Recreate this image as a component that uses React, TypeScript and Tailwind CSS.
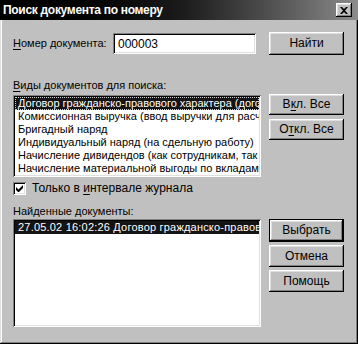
// Win9x-style "find document by number" dialog, greyscale.
const raised =
  "shadow-[inset_-1px_-1px_0_#000,inset_1px_1px_0_#fff,inset_-2px_-2px_0_#808080,inset_2px_2px_0_#dfdfdf]";
const sunken =
  "shadow-[inset_1px_1px_0_#808080,inset_-1px_-1px_0_#fff,inset_2px_2px_0_#000,inset_-2px_-2px_0_#dfdfdf]";

function Btn({
  children,
  def,
  h = "h-[22px]",
}: {
  children: React.ReactNode;
  def?: boolean;
  h?: string;
}) {
  return (
    <div
      className={`${h} w-[75px] shrink-0 bg-[#c0c0c0] text-[12px] text-black ${def ? "border border-black" : ""}`}
    >
      <div className={`w-full h-full flex items-center justify-center ${raised}`}>
        <span className="whitespace-nowrap leading-[13px]">{children}</span>
      </div>
    </div>
  );
}

function U({ children }: { children: React.ReactNode }) {
  return <span className="underline underline-offset-2">{children}</span>;
}

const docTypes = [
  "Договор гражданско-правового характера (договор подряда)",
  "Комиссионная выручка (ввод выручки для расчета)",
  "Бригадный наряд",
  "Индивидуальный наряд (на сдельную работу)",
  "Начисление дивидендов (как сотрудникам, так и сторонним)",
  "Начисление материальной выгоды по вкладам",
];

export default function App() {
  return (
    <div
      className="w-[358px] h-[344px] bg-[#c0c0c0] flex flex-col text-black shadow-[inset_-1px_-1px_0_#000,inset_1px_1px_0_#dfdfdf,inset_-2px_-2px_0_#808080,inset_2px_2px_0_#fff]"
      style={{ fontFamily: '"Liberation Sans", Arial, sans-serif' }}
    >
      {/* title bar */}
      <div className="h-[20px] flex items-center justify-between pl-[3px] pr-[6px] bg-gradient-to-r from-[#000] via-[#1a1a1a] to-[#8c8c8c]">
        <span className="text-white font-bold text-[12px] leading-none whitespace-nowrap tracking-[-0.3px]">
          Поиск документа по номеру
        </span>
        <div className={`w-[16px] h-[14px] bg-[#c0c0c0] flex items-center justify-center ${raised}`}>
          <svg width="8" height="7" viewBox="0 0 8 7">
            <path d="M0 0h2l2 2 2-2h2L5 3.5 8 7H6L4 5 2 7H0l3-3.5z" fill="#000" />
          </svg>
        </div>
      </div>

      <div className="flex flex-col pl-[13px] pt-[12px] text-[11px]">
        {/* number row */}
        <div className="flex items-center h-[23px]">
          <span className="w-[100px] leading-[13px] whitespace-nowrap">
            <U>Н</U>омер документа:
          </span>
          <div className={`w-[143px] h-[21px] bg-white flex items-center pl-[5px] text-[12px] ${sunken}`}>
            000003
          </div>
          <div className="ml-[13px]">
            <Btn h="h-[23px]">Найти</Btn>
          </div>
        </div>

        <div className="mt-[23px] leading-[14px]">
          <U>В</U>иды документов для поиска:
        </div>

        {/* doc types list */}
        <div className="flex mt-[3px]">
          <div className={`w-[248px] h-[82px] bg-white p-[2px] overflow-hidden ${sunken}`}>
            {docTypes.map((t, i) => (
              <div
                key={t}
                className={`h-[13px] leading-[13px] pl-[3px] whitespace-nowrap overflow-hidden ${
                  i === 0 ? "bg-[#141414] text-white outline-1 outline-dotted outline-[#d0d0d0] -outline-offset-1" : ""
                }`}
              >
                {t}
              </div>
            ))}
          </div>
          <div className="flex flex-col gap-[4px] ml-[8px] -mt-[1px]">
            <Btn h="h-[21px]">
              В<U>к</U>л. Все
            </Btn>
            <Btn h="h-[21px]">
              О<U>т</U>кл. Все
            </Btn>
          </div>
        </div>

        {/* checkbox */}
        <div className="flex items-center mt-[5px] h-[13px]">
          <div className={`w-[13px] h-[13px] bg-white flex items-center justify-center ${sunken}`}>
            <svg width="7" height="7" viewBox="0 0 7 7">
              <path d="M0 2v3l2 2h1l4-4V0L2.5 4.5z" fill="#000" />
            </svg>
          </div>
          <span className="ml-[6px] leading-[13px] text-[12px] whitespace-nowrap">
            Только в <U>и</U>нтервале журнала
          </span>
        </div>

        <div className="mt-[10px] leading-[13px]">Найденные документы:</div>

        {/* found list */}
        <div className="flex mt-[1px]">
          <div className={`w-[248px] h-[108px] bg-white p-[2px] overflow-hidden ${sunken}`}>
            <div className="h-[13px] leading-[13px] pl-[3px] whitespace-nowrap overflow-hidden bg-[#141414] text-white tracking-[0.2px]">
              27.05.02 16:02:26 Договор гражданско-правового характера
            </div>
          </div>
          <div className="flex flex-col gap-[3px] ml-[8px]">
            <Btn def h="h-[23px]">
              Выбрать
            </Btn>
            <Btn h="h-[22px]">Отмена</Btn>
            <Btn h="h-[22px]">Помощь</Btn>
          </div>
        </div>
      </div>
    </div>
  );
}
